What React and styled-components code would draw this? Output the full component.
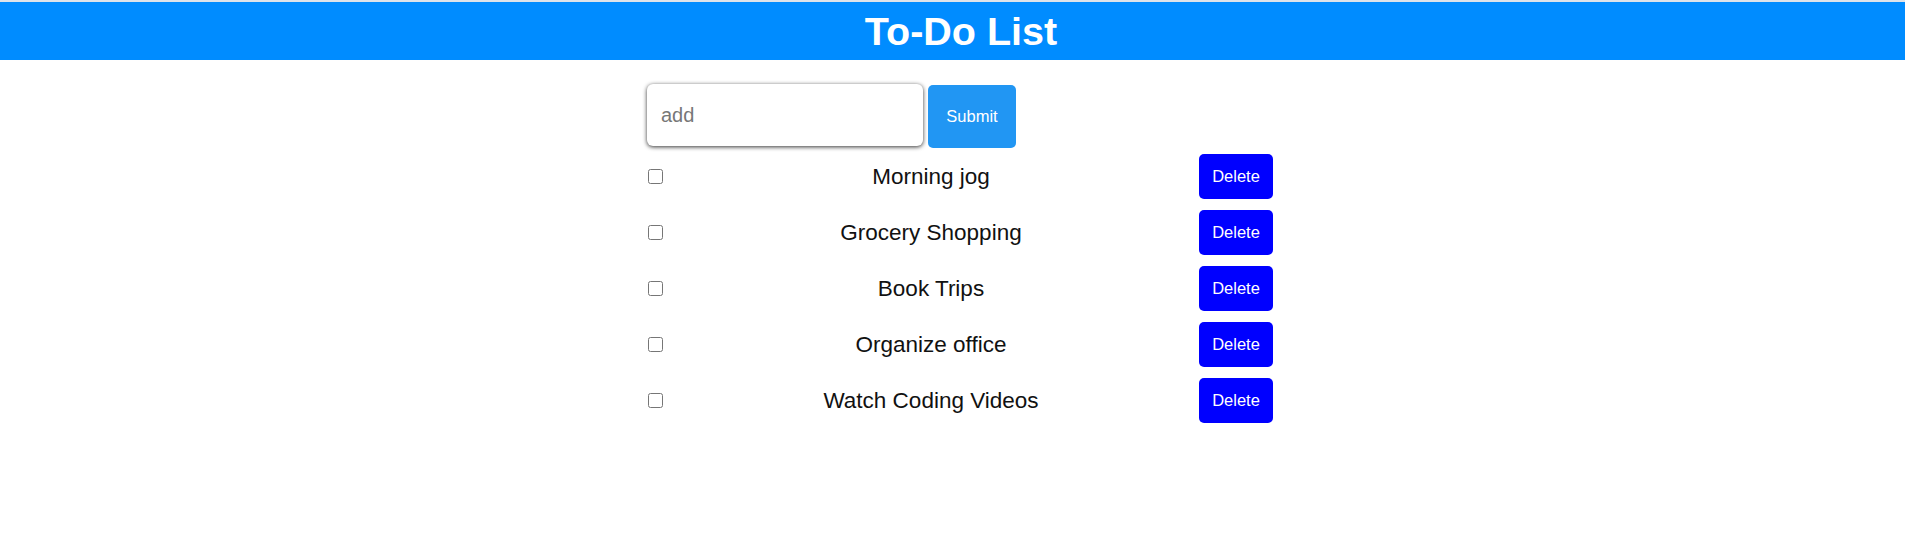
import React, { useState } from 'react';
import styled, { createGlobalStyle } from 'styled-components';

const GlobalStyle = createGlobalStyle`
    body {
        margin: 0;
        border-top: 2px solid #dde3ea;
        background: #fff;
        font-family: "Liberation Sans", Arial, sans-serif;
    }
`;

const Header = styled.header`
    height: 58px;
    background: #008cff;
    display: flex;
    align-items: center;
    justify-content: center;
    padding-left: 17px;
`;

const Title = styled.h1`
    margin: 0;
    color: #fff;
    font-size: 39.5px;
    font-weight: bold;
`;

const Page = styled.div`
    padding-left: 15px;
`;

const Container = styled.main`
    width: 626px;
    margin: 0 auto;
    padding-top: 23px;
`;

const Form = styled.form`
    display: flex;
    align-items: flex-start;
    gap: 5px;
`;

const Input = styled.input`
    box-sizing: border-box;
    width: 276px;
    height: 62px;
    margin-top: 1px;
    border: none;
    border-radius: 6px;
    box-shadow: 0 1px 4px rgba(0, 0, 0, 0.8);
    padding: 0 14px;
    font-family: inherit;
    font-size: 20px;
    outline: none;
    &::placeholder {
        color: #777;
    }
`;

const Button = styled.button`
    border: none;
    border-radius: 5px;
    color: #fff;
    font-family: inherit;
    font-size: 16.5px;
    cursor: pointer;
    background: ${(p) => p.bg};
`;

const SubmitButton = styled(Button)`
    width: 88px;
    height: 63px;
    margin-top: 2px;
`;

const List = styled.ul`
    list-style: none;
    margin: 6px 0 0;
    padding: 0;
`;

const Row = styled.li`
    display: flex;
    align-items: center;
    justify-content: space-between;
    height: 45px;
    margin-bottom: 11px;
`;

const Check = styled.input`
    width: 15px;
    height: 15px;
    margin: 0 0 0 1px;
`;

const Text = styled.span`
    font-size: 22.5px;
    color: #111;
`;

const DeleteButton = styled(Button)`
    width: 74px;
    height: 45px;
`;

const initial = ['Morning jog', 'Grocery Shopping', 'Book Trips', 'Organize office', 'Watch Coding Videos'];

export default function App() {
    const [todos, setTodos] = useState(initial);
    const [text, setText] = useState('');

    const submit = (e) => {
        e.preventDefault();
        if (!text.trim()) return;
        setTodos([...todos, text]);
        setText('');
    };

    return (
        <>
            <GlobalStyle />
            <Header>
                <Title>To-Do List</Title>
            </Header>
            <Page>
                <Container>
                    <Form onSubmit={submit}>
                        <Input placeholder="add" value={text} onChange={(e) => setText(e.target.value)} />
                        <SubmitButton type="submit" bg="#2196f3">Submit</SubmitButton>
                    </Form>
                    <List>
                        {todos.map((t, i) => (
                            <Row key={i}>
                                <Check type="checkbox" />
                                <Text>{t}</Text>
                                <DeleteButton bg="#0000ff" onClick={() => setTodos(todos.filter((_, j) => j !== i))}>
                                    Delete
                                </DeleteButton>
                            </Row>
                        ))}
                    </List>
                </Container>
            </Page>
        </>
    );
}
